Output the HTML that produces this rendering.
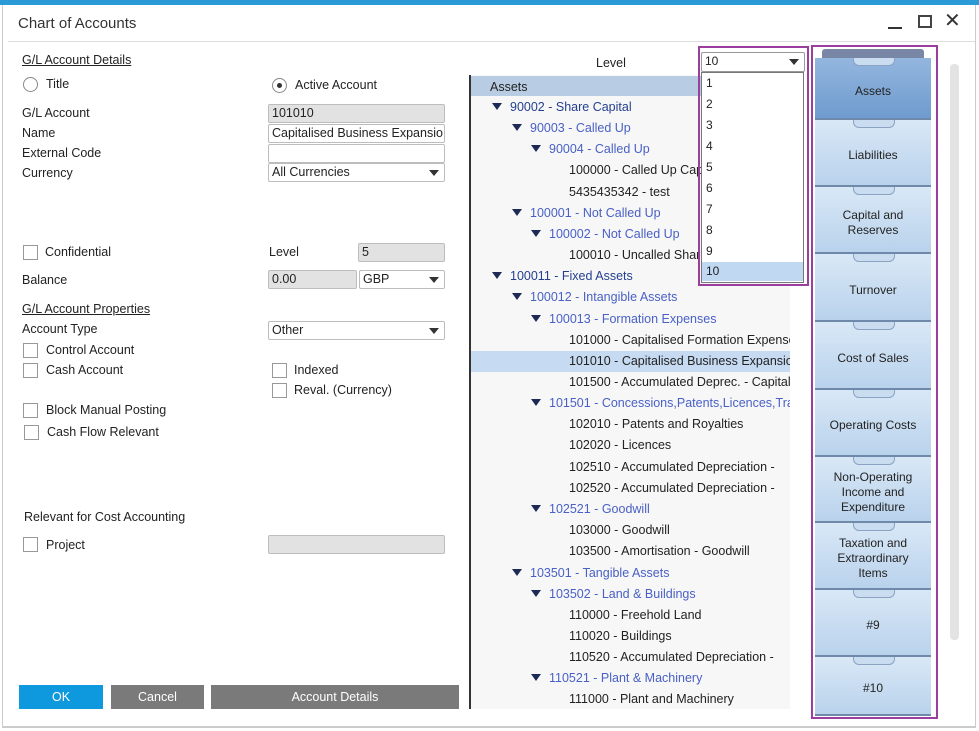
<!DOCTYPE html>
<html><head><meta charset="utf-8"><style>
*{box-sizing:border-box;margin:0;padding:0}
body{width:979px;height:731px;background:#fff;font-family:"Liberation Sans","DejaVu Sans",sans-serif;font-size:12.5px;color:#222;position:relative;overflow:hidden}
.a{position:absolute;white-space:nowrap}
.in{position:absolute;height:19px;border:1px solid #bdbdbd;border-radius:2px;background:#fff;padding:1px 3px;font-size:12.5px;white-space:nowrap;overflow:hidden}
.g{background:#e2e2e2}
.dd::after{content:"";position:absolute;right:5px;top:6px;border-left:5px solid transparent;border-right:5px solid transparent;border-top:6px solid #333}
.cb{position:absolute;width:15px;height:15px;border:1px solid #999;background:#fff}
.t{position:absolute;height:21px;line-height:21px;white-space:nowrap;font-size:12.5px}
.bl{color:#4960c6}.nv{color:#243f8f}
.tri{display:inline-block;width:0;height:0;border-left:5px solid transparent;border-right:5px solid transparent;border-top:7px solid #1c2a55;margin-right:8px;vertical-align:1px}
.dr{position:absolute;left:815px;width:116px;background:linear-gradient(#d9e8f6,#b9d2ec);border-bottom:2px solid #6f89aa;text-align:center;font-size:12px;color:#222;display:flex;align-items:center;justify-content:center;line-height:15px;padding-top:6px}
.dr::before{content:"";position:absolute;left:38px;top:0;width:40px;height:7px;border:1px solid #8aa3c2;border-top:none;border-radius:0 0 6px 6px;background:#c9dcf0}
.btn{position:absolute;top:685px;height:24px;color:#fff;text-align:center;line-height:24px;font-size:12.5px}
</style></head><body>
<div class="a" style="left:0;top:0;width:979px;height:5px;background:#2a9ad6"></div>
<div class="a" style="left:2px;top:5px;width:1px;height:722px;background:#ccc"></div>
<div class="a" style="left:975px;top:5px;width:1px;height:722px;background:#ccc"></div>
<div class="a" style="left:2px;top:726px;width:974px;height:2px;background:#ccc"></div>
<div class="a" style="left:18px;top:15px;font-size:15px;color:#333">Chart of Accounts</div>
<div class="a" style="left:888px;top:27px;width:14px;height:2px;background:#333"></div>
<div class="a" style="left:918px;top:15px;width:14px;height:13px;border:2px solid #444"></div>
<div class="a" style="left:944px;top:8px;font-size:20px;font-weight:bold;color:#333">✕</div>
<div class="a" style="left:8px;top:41px;width:967px;height:1px;background:#ddd"></div>

<div class="a" style="left:22px;top:53px;text-decoration:underline">G/L Account Details</div>
<div class="a" style="left:23px;top:77px;width:15px;height:15px;border:1px solid #888;border-radius:50%"></div>
<div class="a" style="left:46px;top:77px">Title</div>
<div class="a" style="left:272px;top:78px;width:15px;height:15px;border:1px solid #888;border-radius:50%"></div>
<div class="a" style="left:277px;top:83px;width:5px;height:5px;background:#333;border-radius:50%"></div>
<div class="a" style="left:295px;top:78px">Active Account</div>
<div class="a" style="left:22px;top:106px">G/L Account</div>
<div class="a" style="left:22px;top:126px">Name</div>
<div class="a" style="left:22px;top:146px">External Code</div>
<div class="a" style="left:22px;top:166px">Currency</div>
<div class="in g" style="left:268px;top:104px;width:177px">101010</div>
<div class="in" style="left:268px;top:124px;width:177px">Capitalised Business Expansio</div>
<div class="in" style="left:268px;top:144px;width:177px"></div>
<div class="in dd" style="left:268px;top:163px;width:177px">All Currencies</div>
<div class="cb" style="left:23px;top:245px"></div>
<div class="a" style="left:45px;top:245px">Confidential</div>
<div class="a" style="left:269px;top:245px">Level</div>
<div class="in g" style="left:358px;top:243px;width:87px">5</div>
<div class="a" style="left:22px;top:273px">Balance</div>
<div class="in g" style="left:268px;top:270px;width:89px">0.00</div>
<div class="in dd" style="left:359px;top:270px;width:86px">GBP</div>
<div class="a" style="left:22px;top:302px;text-decoration:underline">G/L Account Properties</div>
<div class="a" style="left:22px;top:322px">Account Type</div>
<div class="in dd" style="left:268px;top:321px;width:177px">Other</div>
<div class="cb" style="left:23px;top:343px"></div><div class="a" style="left:46px;top:343px">Control Account</div>
<div class="cb" style="left:23px;top:363px"></div><div class="a" style="left:46px;top:363px">Cash Account</div>
<div class="cb" style="left:272px;top:363px"></div><div class="a" style="left:294px;top:363px">Indexed</div>
<div class="cb" style="left:272px;top:383px"></div><div class="a" style="left:294px;top:383px">Reval. (Currency)</div>
<div class="cb" style="left:23px;top:403px"></div><div class="a" style="left:46px;top:403px">Block Manual Posting</div>
<div class="cb" style="left:24px;top:425px"></div><div class="a" style="left:47px;top:425px">Cash Flow Relevant</div>
<div class="a" style="left:24px;top:510px">Relevant for Cost Accounting</div>
<div class="cb" style="left:23px;top:537px"></div><div class="a" style="left:46px;top:538px">Project</div>
<div class="in g" style="left:268px;top:535px;width:177px"></div>
<div class="btn" style="left:19px;width:84px;background:#0e98dd">OK</div>
<div class="btn" style="left:111px;width:93px;background:#7a7a7a">Cancel</div>
<div class="btn" style="left:211px;width:248px;background:#7a7a7a">Account Details</div>

<div class="a" style="left:596px;top:56px">Level</div>
<div class="a" style="left:469px;top:75px;width:2px;height:634px;background:#333"></div>
<div class="a" style="left:471px;top:75px;width:319px;height:634px;background:#f7f7f7"></div>
<div class="a" style="left:471px;top:76px;width:319px;height:20px;background:#b8cde3"></div>
<div class="a" style="left:490px;top:80px">Assets</div>
<div class="a" style="left:471px;top:351px;width:319px;height:21px;background:#c6daf1"></div>
<div style="position:absolute;left:0;top:97px;width:790px;height:612px;overflow:hidden">
<div class="t nv" style="left:492px;top:0"><span class="tri"></span>90002 - Share Capital</div>
<div class="t bl" style="left:512px;top:21px"><span class="tri"></span>90003 - Called Up</div>
<div class="t bl" style="left:531px;top:42px"><span class="tri"></span>90004 - Called Up</div>
<div class="t" style="left:569px;top:63px">100000 - Called Up Capital</div>
<div class="t" style="left:569px;top:85px">5435435342 - test</div>
<div class="t bl" style="left:512px;top:106px"><span class="tri"></span>100001 - Not Called Up</div>
<div class="t bl" style="left:531px;top:127px"><span class="tri"></span>100002 - Not Called Up</div>
<div class="t" style="left:569px;top:148px">100010 - Uncalled Share</div>
<div class="t nv" style="left:492px;top:169px"><span class="tri"></span>100011 - Fixed Assets</div>
<div class="t bl" style="left:512px;top:190px"><span class="tri"></span>100012 - Intangible Assets</div>
<div class="t bl" style="left:531px;top:212px"><span class="tri"></span>100013 - Formation Expenses</div>
<div class="t" style="left:569px;top:233px">101000 - Capitalised Formation Expenses</div>
<div class="t" style="left:569px;top:254px">101010 - Capitalised Business Expansion</div>
<div class="t" style="left:569px;top:275px">101500 - Accumulated Deprec. - Capital</div>
<div class="t bl" style="left:531px;top:296px"><span class="tri"></span>101501 - Concessions,Patents,Licences,Trade</div>
<div class="t" style="left:569px;top:317px">102010 - Patents and Royalties</div>
<div class="t" style="left:569px;top:338px">102020 - Licences</div>
<div class="t" style="left:569px;top:360px">102510 - Accumulated Depreciation - </div>
<div class="t" style="left:569px;top:381px">102520 - Accumulated Depreciation - </div>
<div class="t bl" style="left:531px;top:402px"><span class="tri"></span>102521 - Goodwill</div>
<div class="t" style="left:569px;top:423px">103000 - Goodwill</div>
<div class="t" style="left:569px;top:444px">103500 - Amortisation - Goodwill</div>
<div class="t bl" style="left:512px;top:466px"><span class="tri"></span>103501 - Tangible Assets</div>
<div class="t bl" style="left:531px;top:487px"><span class="tri"></span>103502 - Land &amp; Buildings</div>
<div class="t" style="left:569px;top:508px">110000 - Freehold Land</div>
<div class="t" style="left:569px;top:529px">110020 - Buildings</div>
<div class="t" style="left:569px;top:550px">110520 - Accumulated Depreciation - </div>
<div class="t bl" style="left:531px;top:571px"><span class="tri"></span>110521 - Plant &amp; Machinery</div>
<div class="t" style="left:569px;top:592px">111000 - Plant and Machinery</div>
</div>

<div class="a" style="left:698px;top:46px;width:111px;height:240px;border:2px solid #9a3f9e"></div>
<div class="in dd" style="left:701px;top:52px;width:104px;height:20px;border-color:#999;font-size:12px">10</div>
<div class="a" style="left:701px;top:72px;width:103px;height:211px;border:1px solid #777;background:#fff;font-size:12px">
<div style="height:21px;line-height:21px;padding-left:4px">1</div>
<div style="height:21px;line-height:21px;padding-left:4px">2</div>
<div style="height:21px;line-height:21px;padding-left:4px">3</div>
<div style="height:21px;line-height:21px;padding-left:4px">4</div>
<div style="height:21px;line-height:21px;padding-left:4px">5</div>
<div style="height:21px;line-height:21px;padding-left:4px">6</div>
<div style="height:21px;line-height:21px;padding-left:4px">7</div>
<div style="height:21px;line-height:21px;padding-left:4px">8</div>
<div style="height:21px;line-height:21px;padding-left:4px">9</div>
<div style="height:19px;line-height:19px;padding-left:4px;background:#c0d8f2">10</div>
</div>

<div class="a" style="left:811px;top:45px;width:127px;height:674px;border:2px solid #9a3f9e"></div>
<div class="a" style="left:822px;top:49px;width:102px;height:10px;background:#7a86a6;border-radius:3px 3px 0 0"></div>
<div class="dr" style="top:58px;height:62px;background:linear-gradient(#93b6de,#6f9bcf)">Assets</div>
<div class="dr" style="top:120px;height:67px">Liabilities</div>
<div class="dr" style="top:187px;height:67px">Capital and<br>Reserves</div>
<div class="dr" style="top:254px;height:68px">Turnover</div>
<div class="dr" style="top:322px;height:68px">Cost of Sales</div>
<div class="dr" style="top:390px;height:67px">Operating Costs</div>
<div class="dr" style="top:457px;height:66px">Non-Operating<br>Income and<br>Expenditure</div>
<div class="dr" style="top:523px;height:67px">Taxation and<br>Extraordinary<br>Items</div>
<div class="dr" style="top:590px;height:67px">#9</div>
<div class="dr" style="top:657px;height:59px">#10</div>
<div class="a" style="left:950px;top:64px;width:9px;height:576px;background:#e3e3e3;border-radius:4px"></div>
</body></html>
